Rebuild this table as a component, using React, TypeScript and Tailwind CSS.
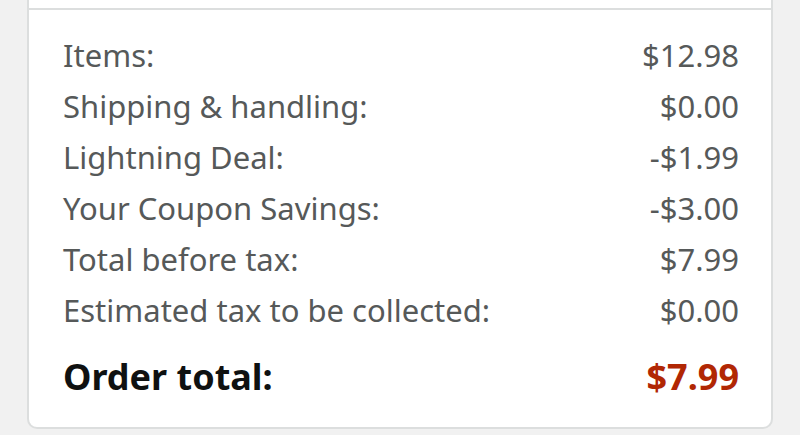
import React from 'react';

interface Line {
    label: string;
    amount: string;
}

const lines: Line[] = [
    {label: 'Items:', amount: '$12.98'},
    {label: 'Shipping & handling:', amount: '$0.00'},
    {label: 'Lightning Deal:', amount: '-$1.99'},
    {label: 'Your Coupon Savings:', amount: '-$3.00'},
    {label: 'Total before tax:', amount: '$7.99'},
    {label: 'Estimated tax to be collected:', amount: '$0.00'},
];

const App: React.FC = () => {
    return (
        <div className="min-h-[435px] bg-[#f1f1f1] px-[27px] font-['Noto_Sans',sans-serif]">
            <div className="bg-white border-x-2 border-b-2 border-[#dcdede] rounded-b-[10px]">
                <div className="h-[8px]"/>
                <div className="border-t-2 border-[#dcdede] pl-[34px] pr-[32px] pt-[20px] pb-[25px]">
                    {lines.map((line) => (
                        <div key={line.label} className="flex justify-between text-[31px] leading-[51px] text-[#565959]">
                            <span>{line.label}</span>
                            <span>{line.amount}</span>
                        </div>
                    ))}
                    <div className="flex justify-between mt-[15px] text-[36px] leading-[51px] font-bold">
                        <span className="text-[#0f1111]">Order total:</span>
                        <span className="text-[#b12704]">$7.99</span>
                    </div>
                </div>
            </div>
        </div>
    );
};

export default App;
